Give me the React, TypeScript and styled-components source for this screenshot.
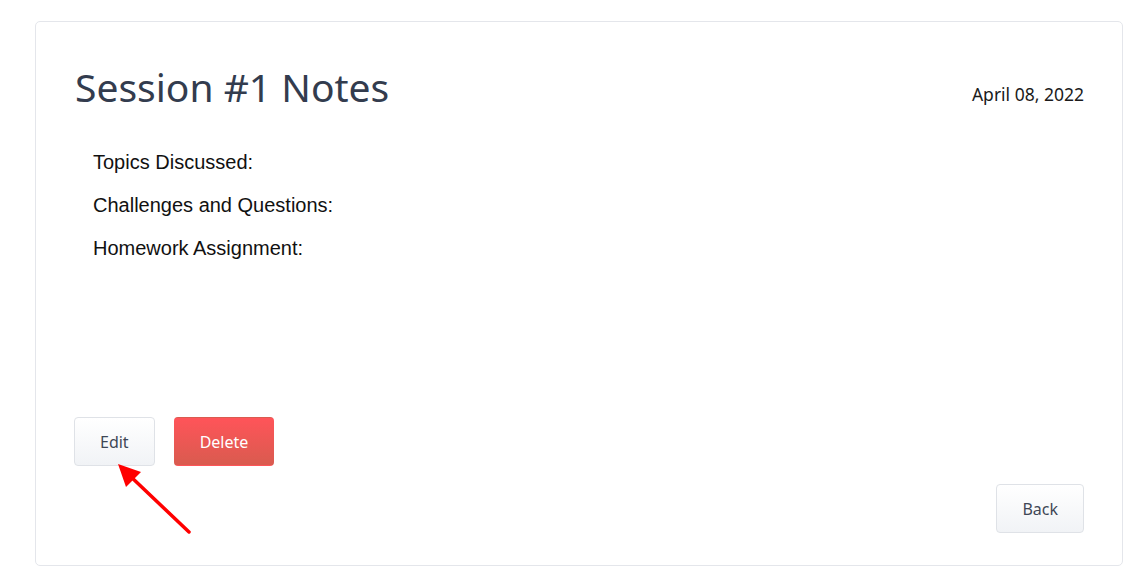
import styled, { createGlobalStyle } from "styled-components";

const GlobalStyle = createGlobalStyle`
  html, body {
    margin: 0;
    padding: 0;
    background: #ffffff;
  }

  * {
    box-sizing: border-box;
  }
`;

const notes = ["Topics Discussed:", "Challenges and Questions:", "Homework Assignment:"];

const App = () => {
  return (
    <>
      <GlobalStyle />
      <Page>
        <Card>
          <Header>
            <Title>Session #1 Notes</Title>
            <DateText>April 08, 2022</DateText>
          </Header>

          <NoteList>
            {notes.map((note) => (
              <NoteItem key={note}>{note}</NoteItem>
            ))}
          </NoteList>

          <Actions>
            <EditWrap>
              <Button>Edit</Button>
              <Pointer viewBox="0 0 80 76" aria-hidden="true">
                <line x1="73" y1="72" x2="12" y2="14" stroke="#ff0000" strokeWidth="3.5" strokeLinecap="round" />
                <polygon points="2,4 25,12 10,27" fill="#ff0000" />
              </Pointer>
            </EditWrap>
            <Button $variant="danger">Delete</Button>
          </Actions>

          <Footer>
            <Button>Back</Button>
          </Footer>
        </Card>
      </Page>
    </>
  );
};

const Page = styled.div`
  padding: 21px 10px 12px 35px;
`;

const Card = styled.div`
  display: flex;
  flex-direction: column;

  width: 1088px;
  height: 545px;

  padding: 42px 38px 32px 39px;
  border: 1px solid #e4e6eb;
  border-radius: 5px;
  background: #ffffff;
`;

const Header = styled.div`
  display: flex;
  align-items: flex-start;
  justify-content: space-between;
`;

const Title = styled.h1`
  margin: 0;

  font-family: "Noto Sans", sans-serif;
  font-size: 39px;
  font-weight: 400;
  line-height: 1.2;
  color: #333c4e;
`;

const DateText = styled.time`
  margin-top: 18px;

  font-family: "Noto Sans", sans-serif;
  font-size: 17.5px;
  color: #1b1b1b;
`;

const NoteList = styled.div`
  display: flex;
  flex-direction: column;
  gap: 20px;

  margin-top: 40px;
  padding-left: 18px;
`;

const NoteItem = styled.p`
  margin: 0;

  font-family: "Liberation Sans", Arial, sans-serif;
  font-size: 20px;
  line-height: 23px;
  color: #111111;
`;

const Actions = styled.div`
  display: flex;
  gap: 19px;

  margin-top: auto;
  margin-left: -1px;
`;

const EditWrap = styled.div`
  position: relative;
`;

const Pointer = styled.svg`
  position: absolute;
  left: 42px;
  top: 43px;

  width: 80px;
  height: 76px;
  overflow: visible;
`;

const Button = styled.button<{ $variant?: "danger" }>`
  height: 49px;
  padding: 0 25px;

  font-family: "Noto Sans", sans-serif;
  font-size: 16px;
  color: ${({ $variant }) => ($variant === "danger" ? "#ffffff" : "#3f4756")};

  border: 1px solid ${({ $variant }) => ($variant === "danger" ? "transparent" : "#dfe2e7")};
  border-radius: 4px;
  background: ${({ $variant }) =>
    $variant === "danger"
      ? "linear-gradient(to bottom, #ff5459, #d95b4f)"
      : "linear-gradient(to bottom, #ffffff, #f1f3f6)"};
  cursor: pointer;
`;

const Footer = styled.div`
  display: flex;
  justify-content: flex-end;

  margin-top: 18px;
`;

export default App;
